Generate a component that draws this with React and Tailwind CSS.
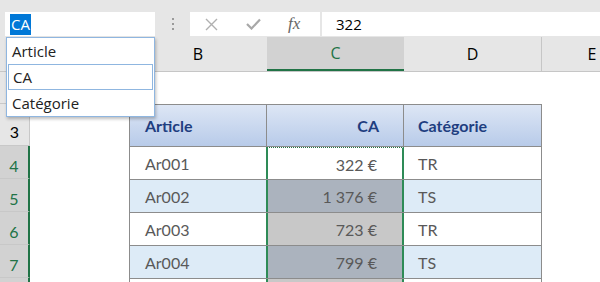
import React from 'react';

const rows = [
    { n: 4, article: 'Ar001', ca: '322 €', cat: 'TR', band: false, active: true },
    { n: 5, article: 'Ar002', ca: '1 376 €', cat: 'TS', band: true },
    { n: 6, article: 'Ar003', ca: '723 €', cat: 'TR', band: false },
    { n: 7, article: 'Ar004', ca: '799 €', cat: 'TS', band: true },
    { n: 8, article: '', ca: '', cat: '', band: false },
];

const RowHeader = ({ label, selected, className = '' }) => (
    <div
        className={`w-[30px] shrink-0 flex items-end justify-center border-b border-[#c8c8c8] text-[16px] leading-[20px] ${selected ? 'bg-[#d2d2d2] text-[#217346] border-r-2 border-r-[#217346]' : 'bg-[#e6e6e6] text-black border-r border-r-[#c8c8c8]'} ${className}`}
    >
        {label}
    </div>
);

const App = () => {
    return (
        <div className="relative w-[600px] h-[282px] overflow-hidden bg-white font-['Open_Sans',sans-serif]">
            {/* Formula bar */}
            <div className="h-[37px] bg-[#e6e6e6] flex items-start pt-[12px]">
                <div className="ml-[5px] w-[150px] h-[24px] bg-white flex items-center pl-[5px]">
                    <span className="bg-[#0078d7] text-white text-[15px] leading-[21px] px-[1px]">CA</span>
                </div>
                <div className="w-[35px] flex flex-col items-center gap-[3px] pt-[6px]">
                    <span className="w-[2px] h-[2px] bg-[#9a9a9a]"></span>
                    <span className="w-[2px] h-[2px] bg-[#9a9a9a]"></span>
                    <span className="w-[2px] h-[2px] bg-[#9a9a9a]"></span>
                </div>
                <div className="w-[130px] h-[24px] bg-white flex items-center">
                    <svg className="ml-[15px]" width="13" height="13" viewBox="0 0 13 13">
                        <path d="M1 1 L12 12 M12 1 L1 12" stroke="#b0b0b0" strokeWidth="1.4" fill="none" />
                    </svg>
                    <svg className="ml-[28px]" width="15" height="12" viewBox="0 0 15 12">
                        <path d="M1 6 L5.5 10.5 L14 1.5" stroke="#a8a8a8" strokeWidth="2.2" fill="none" />
                    </svg>
                    <span className="ml-[27px] font-['Liberation_Serif',serif] italic text-[17px] text-[#666]">fx</span>
                </div>
                <div className="ml-[2px] flex-1 h-[24px] bg-white flex items-center pl-[14px] text-[15px] text-black">
                    322
                </div>
            </div>

            {/* Column headers */}
            <div className="h-[35px] flex bg-[#e6e6e6] border-b border-[#c6c6c6] text-[16px] text-black">
                <div className="w-[30px] shrink-0"></div>
                <div className="w-[99px] shrink-0"></div>
                <div className="w-[138px] shrink-0 flex items-center justify-center">B</div>
                <div className="w-[137px] shrink-0 flex items-center justify-center bg-[#d2d2d2] text-[#217346] border-b-2 border-[#217346]">C</div>
                <div className="w-[138px] shrink-0 flex items-center justify-center border-r border-[#c6c6c6]">D</div>
                <div className="w-[100px] shrink-0 flex items-center justify-center">E</div>
            </div>

            {/* Sheet */}
            <div className="font-['Lato',sans-serif] text-[16px]">
                {/* Row 2 (hidden under the list) */}
                <div className="h-[32px] flex">
                    <RowHeader label="" />
                    <div className="flex-1"></div>
                </div>

                {/* Row 3: table header */}
                <div className="h-[42px] flex">
                    <RowHeader label="3" className="pb-[3px]" />
                    <div className="w-[99px] shrink-0"></div>
                    <div className="flex w-[413px] shrink-0 border border-b-0 border-[#8c8c8c] bg-gradient-to-b from-[#dde6f5] to-[#b8cbe9] font-bold text-[#1f3e80]">
                        <div className="w-[137px] shrink-0 border-r border-[#8c8c8c] flex items-center pl-[15px]">Article</div>
                        <div className="w-[137px] shrink-0 border-r border-[#8c8c8c] flex items-center justify-end pr-[24px]">CA</div>
                        <div className="flex-1 flex items-center pl-[14px]">Catégorie</div>
                    </div>
                </div>

                {/* Data rows */}
                {rows.map((r) => {
                    const rowBg = r.band ? 'bg-[#ddebf7]' : 'bg-white';
                    const caBg = r.active ? 'bg-white' : r.band ? 'bg-[#abb3be]' : 'bg-[#c8c8c8]';
                    return (
                        <div key={r.n} className="h-[33px] flex">
                            <RowHeader label={r.article ? r.n : ''} selected className="pb-[2px]" />
                            <div className="w-[99px] shrink-0"></div>
                            <div className={`flex w-[413px] shrink-0 border-l border-r border-t border-[#8c8c8c] ${rowBg} text-[#595959]`}>
                                <div className="w-[137px] shrink-0 flex items-center pt-[2px] pl-[15px]">{r.article}</div>
                                <div className={`w-[138px] shrink-0 -ml-px flex items-center justify-end pt-[2px] pr-[25px] border-l-2 border-r-2 border-[#2e8b57] ${caBg} ${r.active ? 'border-t border-t-[#217346] [border-top-style:dotted]' : ''}`}>
                                    {r.ca}
                                </div>
                                <div className="flex-1 flex items-center pt-[2px] pl-[14px]">{r.cat}</div>
                            </div>
                        </div>
                    );
                })}
            </div>

            {/* Autocomplete list */}
            <div className="absolute left-[6px] top-[37px] w-[149px] bg-white border border-[#8fb6e0] shadow-[1px_2px_3px_rgba(0,0,0,0.25)] text-[15px] text-[#222]">
                <div className="h-[26px] flex items-center pl-[5px]">Article</div>
                <div className="h-[26px] flex items-center pl-[4px] border border-[#8fb6e0] mx-[1px]">CA</div>
                <div className="h-[26px] flex items-center pl-[5px]">Catégorie</div>
            </div>
        </div>
    );
};

export default App;
